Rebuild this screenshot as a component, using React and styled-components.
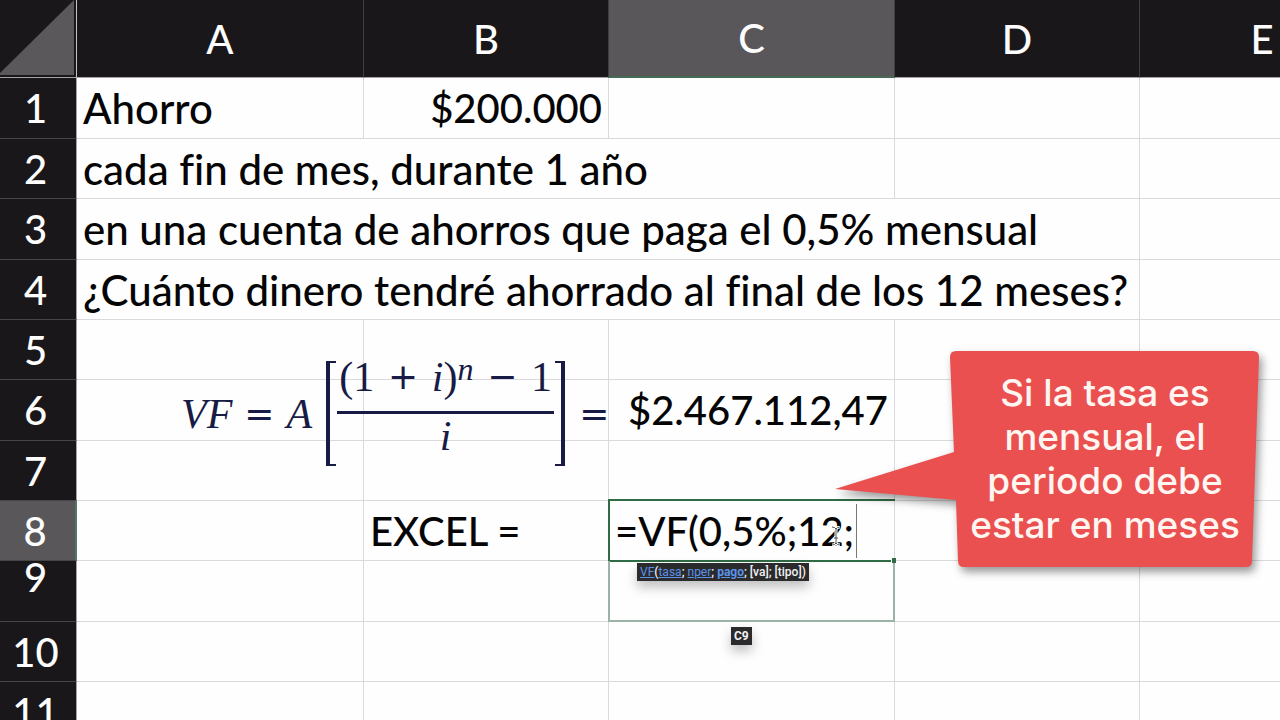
import React from "react";
import styled, { createGlobalStyle, css } from "styled-components";

const GlobalStyle = createGlobalStyle`
  * { box-sizing: border-box; }
  html, body { margin: 0; background: #fefefe; }
  body { overflow: hidden; }
`;

const sheetFont = `Lato, "Open Sans", sans-serif`;
const mathFont = `"Liberation Serif", serif`;
const line = "#dad9dd";
const headDark = "#19171a";
const headActive = "#595759";
const green = "#2f6b45";
const ink = "#171b45";

const Sheet = styled.main`
  position: relative;
  width: 100%;
  height: 100vh;
  overflow: hidden;
  font-family: ${sheetFont};
  font-size: 40px;
  font-weight: 500;
  line-height: 48px;
  color: #050505;
`;

const Grid = styled.table`
  table-layout: fixed;
  width: 1385px;
  border-collapse: separate;
  border-spacing: 0;
`;

const Col = styled.col`
  width: ${(p) => p.$w}px;
`;

const HeadRow = styled.tr`
  height: 78px;
`;

const Row = styled.tr`
  height: ${(p) => (p.$tall ? 61 : 60)}px;
`;

const headBase = css`
  padding: 0;
  color: #fdfdfd;
  font-weight: 500;
  text-align: center;
  vertical-align: middle;
  background: ${(p) => (p.$active ? headActive : headDark)};
`;

const ColHead = styled.th`
  ${headBase}
  border-right: 1px solid #3f3e41;
  border-bottom: ${(p) => (p.$active ? "2px solid #476a56" : "1px solid #a3a2a5")};
`;

const RowHead = styled.th`
  ${headBase}
  padding-right: 5px;
  line-height: 32px;
  vertical-align: ${(p) => (p.$top ? "top" : "middle")};
  border-right: ${(p) => (p.$active ? "2px solid #4f7a60" : "1px solid #a3a2a5")};
  border-bottom: 1px solid #454447;
`;

const Corner = styled.th`
  ${headBase}
  vertical-align: top;
  border-right: 1px solid #c4c3c6;
  border-bottom: 1px solid #a3a2a5;
`;

const CornerMark = styled.svg`
  display: block;
`;

const Cell = styled.td`
  padding: 0 6px;
  white-space: nowrap;
  text-align: ${(p) => (p.$right ? "right" : "left")};
  border-right: 1px solid ${line};
  border-bottom: 1px solid ${line};
`;

const TextCell = styled(Cell)`
  font-size: 42px;
  font-variant-ligatures: none;
`;

const EditCell = styled(Cell)`
  position: relative;
  padding: 0 0 0 6px;
`;

const EditFrame = styled.div`
  position: absolute;
  inset: -2px -1px;
  border: 2px solid ${green};
  border-right: 0;
  pointer-events: none;
`;

const FillHandle = styled.span`
  position: absolute;
  right: -2px;
  bottom: -3px;
  z-index: 1;
  width: 5px;
  height: 5px;
  border-left: 1px solid #fefefe;
  background: ${green};
`;

const Editor = styled.div`
  display: flex;
  align-items: center;
`;

const FormulaInput = styled.input`
  width: 241px;
  height: 54px;
  padding: 0;
  border: 0;
  outline: 0;
  background: transparent;
  font: inherit;
  color: inherit;
`;

const Caret = styled.span`
  width: 1px;
  height: 54px;
  background: #77777a;
`;

const IBeam = styled.svg`
  position: absolute;
  left: 222px;
  top: 25px;
`;

const TargetCell = styled(Cell)`
  position: relative;
`;

const TargetFrame = styled.div`
  position: absolute;
  inset: 0 -1px -1px -1px;
  border: 2px solid #9db3a8;
  border-top: 0;
`;

const Tip = styled.div`
  position: absolute;
  left: ${(p) => p.$x}px;
  top: ${(p) => p.$y}px;
  padding: 0 3px;
  background: #2b2a2d;
  color: #f2f2f4;
  font-family: Roboto, sans-serif;
  font-size: 12px;
  font-weight: ${(p) => (p.$bold ? 700 : 500)};
  line-height: 18px;
  box-shadow: 0 6px 12px rgba(0, 0, 0, 0.25);
`;

const TipLink = styled.a`
  color: #5a93ea;
  font-weight: ${(p) => (p.$current ? 700 : 400)};
`;

const Equation = styled.div`
  position: absolute;
  left: 181px;
  top: 360px;
  display: flex;
  align-items: center;
  height: 107px;
  font-family: ${mathFont};
  font-size: 42px;
  font-weight: 400;
  line-height: 48px;
  color: ${ink};
  white-space: nowrap;
`;

const Term = styled.span`
  margin-right: ${(p) => p.$gap || 0}px;
  font-style: ${(p) => (p.$italic ? "italic" : "normal")};
`;

const Operator = styled(Term)`
  font-family: "DejaVu Sans", sans-serif;
  font-size: 36px;
`;

const Bracket = styled.span`
  width: 10px;
  height: 105px;
  border: solid ${ink};
  border-width: ${(p) => (p.$close ? "2px 4px 2px 0" : "2px 0 2px 4px")};
  margin-right: ${(p) => (p.$close ? 14 : 0)}px;
`;

const Fraction = styled.span`
  display: flex;
  flex-direction: column;
  align-items: center;
  width: 219px;
  padding: 0 1px 12px;
  line-height: 44px;
`;

const Numerator = styled.span`
  display: flex;
  justify-content: space-between;
  width: 100%;
  padding: 0 2px 14px;
  border-bottom: 3px solid ${ink};
  line-height: 40px;
`;

const Power = styled.sup`
  font-size: 32px;
  font-style: italic;
  line-height: 24px;
  vertical-align: top;
`;

const Callout = styled.aside`
  position: absolute;
  left: 830px;
  top: 346px;
  width: 440px;
  height: 232px;
`;

const Bubble = styled.svg`
  display: block;
  overflow: visible;
  filter: drop-shadow(3px 5px 4px rgba(0, 0, 0, 0.4));
`;

const CalloutText = styled.p`
  position: absolute;
  inset: 25px 8px auto 118px;
  margin: 0;
  padding: 0 8px;
  color: #fff6f2;
  font-family: Inter, sans-serif;
  font-size: 37px;
  font-weight: 500;
  line-height: 44px;
  text-align: center;
  white-space: nowrap;
`;

const Blank = ({ n }) => Array.from({ length: n }, (_, i) => <Cell key={i} />);

export default function App() {
  return (
    <>
      <GlobalStyle />
      <Sheet>
        <Grid>
          <colgroup>
            <Col $w={77} />
            <Col $w={287} />
            <Col $w={245} />
            <Col $w={286} />
            <Col $w={245} />
            <Col $w={245} />
          </colgroup>
          <thead>
            <HeadRow>
              <Corner aria-label="Seleccionar todo">
                <CornerMark width="76" height="76" viewBox="0 0 76 76">
                  <path d="M0 73 L74 0 V75 H0 Z" fill="#5a585b" />
                </CornerMark>
              </Corner>
              <ColHead>A</ColHead>
              <ColHead>B</ColHead>
              <ColHead $active>C</ColHead>
              <ColHead>D</ColHead>
              <ColHead>E</ColHead>
            </HeadRow>
          </thead>
          <tbody>
            <Row $tall>
              <RowHead>1</RowHead>
              <TextCell>Ahorro</TextCell>
              <Cell $right>$200.000</Cell>
              <Blank n={3} />
            </Row>
            <Row>
              <RowHead>2</RowHead>
              <TextCell colSpan={3}>cada fin de mes, durante 1 año</TextCell>
              <Blank n={2} />
            </Row>
            <Row $tall>
              <RowHead>3</RowHead>
              <TextCell colSpan={4}>en una cuenta de ahorros que paga el 0,5% mensual</TextCell>
              <Blank n={1} />
            </Row>
            <Row>
              <RowHead>4</RowHead>
              <TextCell colSpan={4}>¿Cuánto dinero tendré ahorrado al final de los 12 meses?</TextCell>
              <Blank n={1} />
            </Row>
            <Row>
              <RowHead>5</RowHead>
              <Blank n={5} />
            </Row>
            <Row $tall>
              <RowHead>6</RowHead>
              <Blank n={2} />
              <Cell $right>$2.467.112,47</Cell>
              <Blank n={2} />
            </Row>
            <Row>
              <RowHead>7</RowHead>
              <Blank n={5} />
            </Row>
            <Row>
              <RowHead $active>8</RowHead>
              <Cell />
              <Cell>EXCEL =</Cell>
              <EditCell>
                <Editor>
                  <FormulaInput aria-label="Fórmula de C8" defaultValue="=VF(0,5%;12;" />
                  <Caret />
                </Editor>
                <EditFrame />
                <FillHandle />
                <IBeam width="10" height="20" viewBox="0 0 10 20">
                  <path d="M1 1 Q4 1 5 3 Q6 1 9 1 M5 3 V17 M1 19 Q4 19 5 17 Q6 19 9 19 M3 12 H7" fill="none" stroke="#fff" strokeWidth="3" />
                  <path d="M1 1 Q4 1 5 3 Q6 1 9 1 M5 3 V17 M1 19 Q4 19 5 17 Q6 19 9 19 M3 12 H7" fill="none" stroke="#555" strokeWidth="1" />
                </IBeam>
              </EditCell>
              <Blank n={2} />
            </Row>
            <Row $tall>
              <RowHead $top>9</RowHead>
              <Blank n={2} />
              <TargetCell>
                <TargetFrame />
                <Tip $x={28} $y={2}>
                  <TipLink href="#vf">VF</TipLink>(<TipLink href="#tasa">tasa</TipLink>;{" "}
                  <TipLink href="#nper">nper</TipLink>;{" "}
                  <TipLink href="#pago" $current>pago</TipLink>; [va]; [tipo])
                </Tip>
                <Tip $x={122} $y={66} $bold>C9</Tip>
              </TargetCell>
              <Blank n={2} />
            </Row>
            <Row>
              <RowHead>10</RowHead>
              <Blank n={5} />
            </Row>
            <Row $tall>
              <RowHead>11</RowHead>
              <Blank n={5} />
            </Row>
          </tbody>
        </Grid>

        <Equation>
          <Term $italic $gap={12}>VF</Term>
          <Operator $gap={12}>=</Operator>
          <Term $italic $gap={14}>A</Term>
          <Bracket />
          <Fraction>
            <Numerator>
              <Term>(1</Term>
              <Operator>+</Operator>
              <Term><Term $italic>i</Term>)<Power>n</Power></Term>
              <Operator>−</Operator>
              <Term>1</Term>
            </Numerator>
            <Term $italic>i</Term>
          </Fraction>
          <Bracket $close />
          <Operator>=</Operator>
        </Equation>

        <Callout>
          <Bubble width="440" height="232" viewBox="0 0 440 232">
            <path
              d="M126 5 H423 Q429 5 429 11 L422 215 Q422 221 416 221 H134 Q128 221 128 215 L126 154 L5 143 L124 106 L120 11 Q120 5 126 5 Z"
              fill="#ea504f"
            />
          </Bubble>
          <CalloutText>
            Si la tasa es<br />mensual, el<br />periodo debe<br />estar en meses
          </CalloutText>
        </Callout>
      </Sheet>
    </>
  );
}
